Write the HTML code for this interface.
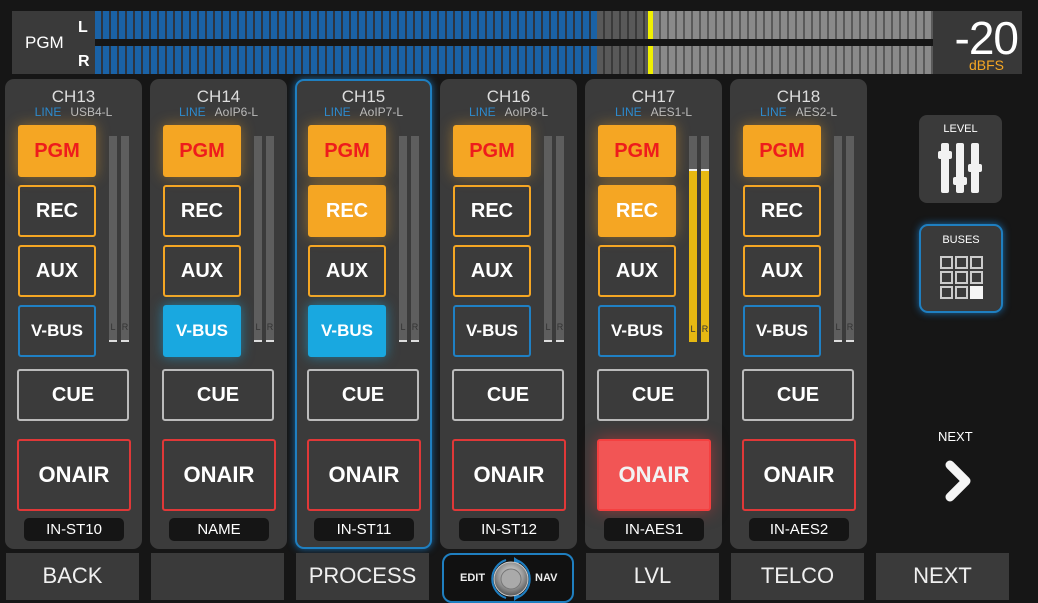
<!DOCTYPE html>
<html><head><meta charset="utf-8"><style>
*{margin:0;padding:0;box-sizing:border-box}
body{width:1038px;height:600px;background:#161616;position:relative;overflow:hidden;font-family:"Liberation Sans",sans-serif;color:#fff}
.a{position:absolute}
.pgmbox{left:12px;top:11px;width:83px;height:63px;background:#3a3a3a}
.seg{position:absolute;height:28px}
.num{left:933px;top:11px;width:89px;height:63px;background:#383838}
.strip{position:absolute;top:79px;width:137px;height:470px;background:#3b3b3b;border-radius:9px}
.strip.sel{border:2px solid #1f7fc0;box-shadow:0 0 8px #1a6aa8}
.t{position:absolute;left:0;width:96px;text-align:center;font-size:17px;color:#ddd;top:8px}
.sub{position:absolute;left:0;width:96px;text-align:center;font-size:12px;top:26px;color:#bbb;white-space:nowrap}
.sub b{font-weight:normal;color:#2a8ad0;margin-right:9px}
.btn{position:absolute;left:13px;width:78px;height:52px;border-radius:3px;display:flex;align-items:center;justify-content:center;font-weight:bold;font-size:20px;border:2px solid #f5a623;color:#fff}
.on{background:#f5a623;box-shadow:0 0 14px rgba(245,166,35,.45)}
.red{color:#ee1c1c}
.vb{border-color:#1f80c4;font-size:17px}
.vbon{background:#19a8e0;border-color:#19a8e0;box-shadow:0 0 12px rgba(25,168,224,.6)}
.cue{left:12px;width:112px;height:52px;top:290px;border-color:#bbb}
.onair{left:12px;width:114px;height:72px;top:360px;border-color:#e03838;font-size:22px}
.onairon{background:#f25555;border-color:#f54040;color:#f2f2f2;box-shadow:0 0 16px rgba(240,60,60,.5)}
.bar{position:absolute;top:57px;width:8px;height:206px;background:#5e5e5e;border-bottom:2px solid #ddd}
.bar span{position:absolute;bottom:8px;width:100%;text-align:center;font-size:9px;color:#333}
.name{position:absolute;left:19px;top:439px;width:100px;height:23px;background:#151515;border-radius:5px;text-align:center;font-size:15px;line-height:23px}
.nav{position:absolute;top:553px;width:133px;height:47px;background:#3a3a3a;text-align:center;font-size:22px;line-height:46px;color:#f0f0f0}
</style></head><body>
<div class="a pgmbox"><div class="a" style="left:13px;top:22px;font-size:17px">PGM</div><div class="a" style="left:66px;top:8px;font-size:16px;font-weight:bold">L</div><div class="a" style="left:66px;top:42px;font-size:16px;font-weight:bold">R</div></div>
<div class="seg" style="left:95px;top:11px;width:502px;background:repeating-linear-gradient(90deg,#1a62a6 0 6px,#2d3540 6px 8px)"></div>
<div class="seg" style="left:597px;top:11px;width:51px;background:repeating-linear-gradient(90deg,#595959 0 6px,#3a3a3a 6px 8px)"></div>
<div class="seg" style="left:648px;top:11px;width:5px;background:#f0f000"></div>
<div class="seg" style="left:653px;top:11px;width:280px;background:repeating-linear-gradient(90deg,#8a8a8a 0 6px,#5a5a5a 6px 8px)"></div>
<div class="seg" style="left:95px;top:46px;width:502px;background:repeating-linear-gradient(90deg,#1a62a6 0 6px,#2d3540 6px 8px)"></div>
<div class="seg" style="left:597px;top:46px;width:51px;background:repeating-linear-gradient(90deg,#595959 0 6px,#3a3a3a 6px 8px)"></div>
<div class="seg" style="left:648px;top:46px;width:5px;background:#f0f000"></div>
<div class="seg" style="left:653px;top:46px;width:280px;background:repeating-linear-gradient(90deg,#8a8a8a 0 6px,#5a5a5a 6px 8px)"></div>
<div class="a num"><div class="a" style="right:4px;top:2px;font-size:46px;line-height:50px;letter-spacing:-1px">-20</div><div class="a" style="right:18px;top:46px;font-size:14px;color:#f5a623">dBFS</div></div>

<div class="strip" style="left:5px"><div class="t" style="width:137px">CH13</div><div class="sub" style="width:137px"><b>LINE</b>USB4-L</div>
<div class="btn on red" style="top:46px">PGM</div><div class="btn" style="top:106px">REC</div><div class="btn" style="top:166px">AUX</div><div class="btn vb" style="top:226px">V-BUS</div>
<div class="bar" style="left:104px"><span>L</span></div><div class="bar" style="left:116px"><span>R</span></div>
<div class="btn cue">CUE</div><div class="btn onair">ONAIR</div><div class="name">IN-ST10</div></div>

<div class="strip" style="left:150px"><div class="t" style="width:137px">CH14</div><div class="sub" style="width:137px"><b>LINE</b>AoIP6-L</div>
<div class="btn on red" style="top:46px">PGM</div><div class="btn" style="top:106px">REC</div><div class="btn" style="top:166px">AUX</div><div class="btn vb vbon" style="top:226px">V-BUS</div>
<div class="bar" style="left:104px"><span>L</span></div><div class="bar" style="left:116px"><span>R</span></div>
<div class="btn cue">CUE</div><div class="btn onair">ONAIR</div><div class="name">NAME</div></div>

<div class="strip sel" style="left:295px"><div style="position:absolute;left:-2px;top:-2px;width:137px;height:470px">
<div class="t" style="width:137px">CH15</div><div class="sub" style="width:137px"><b>LINE</b>AoIP7-L</div>
<div class="btn on red" style="top:46px">PGM</div><div class="btn on" style="top:106px">REC</div><div class="btn" style="top:166px">AUX</div><div class="btn vb vbon" style="top:226px">V-BUS</div>
<div class="bar" style="left:104px"><span>L</span></div><div class="bar" style="left:116px"><span>R</span></div>
<div class="btn cue">CUE</div><div class="btn onair">ONAIR</div><div class="name">IN-ST11</div></div></div>

<div class="strip" style="left:440px"><div class="t" style="width:137px">CH16</div><div class="sub" style="width:137px"><b>LINE</b>AoIP8-L</div>
<div class="btn on red" style="top:46px">PGM</div><div class="btn" style="top:106px">REC</div><div class="btn" style="top:166px">AUX</div><div class="btn vb" style="top:226px">V-BUS</div>
<div class="bar" style="left:104px"><span>L</span></div><div class="bar" style="left:116px"><span>R</span></div>
<div class="btn cue">CUE</div><div class="btn onair">ONAIR</div><div class="name">IN-ST12</div></div>

<div class="strip" style="left:585px"><div class="t" style="width:137px">CH17</div><div class="sub" style="width:137px"><b>LINE</b>AES1-L</div>
<div class="btn on red" style="top:46px">PGM</div><div class="btn on" style="top:106px">REC</div><div class="btn" style="top:166px">AUX</div><div class="btn vb" style="top:226px">V-BUS</div>
<div class="bar" style="left:104px;background:linear-gradient(#5e5e5e 0 33px,#eee 33px 35px,#e6b812 35px);border:0"><span>L</span></div><div class="bar" style="left:116px;background:linear-gradient(#5e5e5e 0 33px,#eee 33px 35px,#e6b812 35px);border:0"><span>R</span></div>
<div class="btn cue">CUE</div><div class="btn onair onairon">ONAIR</div><div class="name">IN-AES1</div></div>

<div class="strip" style="left:730px"><div class="t" style="width:137px">CH18</div><div class="sub" style="width:137px"><b>LINE</b>AES2-L</div>
<div class="btn on red" style="top:46px">PGM</div><div class="btn" style="top:106px">REC</div><div class="btn" style="top:166px">AUX</div><div class="btn vb" style="top:226px">V-BUS</div>
<div class="bar" style="left:104px"><span>L</span></div><div class="bar" style="left:116px"><span>R</span></div>
<div class="btn cue">CUE</div><div class="btn onair">ONAIR</div><div class="name">IN-AES2</div></div>

<div class="a" style="left:919px;top:115px;width:83px;height:88px;background:#3a3a3a;border-radius:8px">
<div class="a" style="left:0;width:83px;top:8px;text-align:center;font-size:11px">LEVEL</div>
<svg class="a" style="left:18px;top:27px" width="48" height="54"><g fill="#f2f2f2"><rect x="4" y="1" width="8" height="50" rx="2"/><rect x="1" y="9" width="14" height="8" rx="2"/><rect x="19" y="1" width="8" height="50" rx="2"/><rect x="16" y="35" width="14" height="8" rx="2"/><rect x="34" y="1" width="8" height="50" rx="2"/><rect x="31" y="22" width="14" height="8" rx="2"/></g></svg></div>
<div class="a" style="left:919px;top:224px;width:84px;height:89px;background:#3a3a3a;border-radius:9px;border:2px solid #1f7fc0;box-shadow:0 0 8px #1a6aa8">
<div class="a" style="left:0;width:80px;top:8px;text-align:center;font-size:11px">BUSES</div>
<svg class="a" style="left:18px;top:29px" width="46" height="46"><g fill="none" stroke="#ccc" stroke-width="2"><rect x="2" y="2" width="11" height="11"/><rect x="17" y="2" width="11" height="11"/><rect x="32" y="2" width="11" height="11"/><rect x="2" y="17" width="11" height="11"/><rect x="17" y="17" width="11" height="11"/><rect x="32" y="17" width="11" height="11"/><rect x="2" y="32" width="11" height="11"/><rect x="17" y="32" width="11" height="11"/></g><rect x="31" y="31" width="13" height="13" fill="#f5f5f5"/></svg></div>
<div class="a" style="left:938px;top:429px;font-size:13px">NEXT</div>
<svg class="a" style="left:942px;top:459px" width="34" height="44"><path d="M8 6 L24 22 L8 38" fill="none" stroke="#f5f5f5" stroke-width="9" stroke-linecap="round" stroke-linejoin="round"/></svg>

<div class="nav" style="left:6px">BACK</div>
<div class="nav" style="left:151px"></div>
<div class="nav" style="left:296px">PROCESS</div>
<div class="a" style="left:442px;top:553px;width:132px;height:50px;background:#111;border:2px solid #1f7fc0;border-radius:10px">
<div class="a" style="left:16px;top:17px;font-size:11px;font-weight:bold;color:#eee">EDIT</div>
<div class="a" style="left:91px;top:17px;font-size:11px;font-weight:bold;color:#eee">NAV</div>
<svg class="a" style="left:44px;top:2px" width="46" height="44"><path d="M18 3 A20 20 0 0 0 18 41" fill="none" stroke="#1f80c4" stroke-width="2"/><path d="M28 3 A20 20 0 0 1 28 41" fill="none" stroke="#1f80c4" stroke-width="2"/><path d="M26 0 L33 5 L26 8Z M26 36 L33 39 L26 44Z" fill="#1f80c4"/><defs><radialGradient id="g" cx=".5" cy=".4" r=".6"><stop offset="0" stop-color="#eee"/><stop offset=".6" stop-color="#999"/><stop offset="1" stop-color="#555"/></radialGradient></defs><circle cx="23" cy="22" r="17" fill="url(#g)" stroke="#ccc"/><circle cx="23" cy="22" r="10" fill="#aaa" stroke="#777"/></svg></div>
<div class="nav" style="left:586px">LVL</div>
<div class="nav" style="left:731px">TELCO</div>
<div class="nav" style="left:876px">NEXT</div>
</body></html>
